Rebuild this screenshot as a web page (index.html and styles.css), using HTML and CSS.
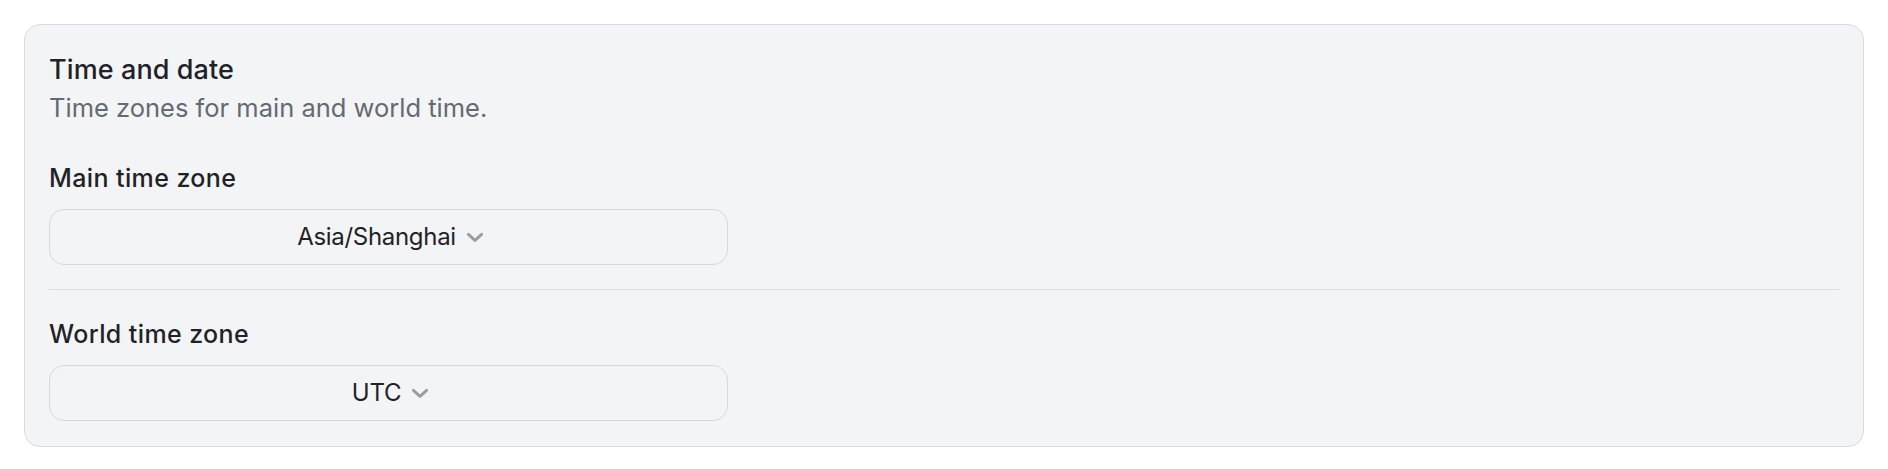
FILE: index.html
```html
<!DOCTYPE html>
<html lang="en">
<head>
<meta charset="utf-8">
<title>Time and date</title>
<link rel="stylesheet" href="styles.css">
</head>
<body>
<section class="card">
  <header class="card-header">
    <h2 class="card-title">Time and date</h2>
    <p class="card-subtitle">Time zones for main and world time.</p>
  </header>
  <div class="field">
    <label class="field-label">Main time zone</label>
    <button class="select" type="button">
      <span class="select-value">Asia/Shanghai</span>
      <svg class="chevron" viewBox="0 0 18 11" width="18" height="11" aria-hidden="true"><path d="M2.4 2.4 L9 8.4 L15.6 2.4" fill="none" stroke="currentColor" stroke-width="3" stroke-linecap="round" stroke-linejoin="round"/></svg>
    </button>
  </div>
  <hr class="divider">
  <div class="field">
    <label class="field-label">World time zone</label>
    <button class="select" type="button">
      <span class="select-value">UTC</span>
      <svg class="chevron" viewBox="0 0 18 11" width="18" height="11" aria-hidden="true"><path d="M2.4 2.4 L9 8.4 L15.6 2.4" fill="none" stroke="currentColor" stroke-width="3" stroke-linecap="round" stroke-linejoin="round"/></svg>
    </button>
  </div>
</section>
</body>
</html>
```

FILE: styles.css
```css
* { box-sizing: border-box; }
html, body { background: #ffffff; }
body {
  margin: 0;
  padding: 24px;
  font-family: Inter, "Noto Sans", "Liberation Sans", sans-serif;
  color: #1f2328;
}
.card {
  background: #f3f4f6;
  border: 1px solid #d9dbdf;
  border-radius: 16px;
  padding: 26px 24px 25px;
}
.card-header { margin-bottom: 33px; }
.card-title {
  margin: 0;
  font-size: 27px;
  line-height: 38px;
  font-weight: 500;
  letter-spacing: 0.1px;
  color: #1f2328;
}
.card-subtitle {
  margin: 0;
  font-size: 25.5px;
  line-height: 38px;
  font-weight: 400;
  color: #646a72;
}
.field { display: flex; flex-direction: column; align-items: flex-start; }
.field-label {
  font-size: 25px;
  line-height: 36px;
  font-weight: 500;
  letter-spacing: 0.4px;
  color: #1f2328;
  margin-bottom: 13px;
}
.select {
  display: flex;
  align-items: center;
  justify-content: center;
  gap: 10px;
  width: 679px;
  height: 56px;
  padding: 0 16px 0 20px;
  background: #f3f4f6;
  border: 1px solid #d6d8dc;
  border-radius: 15px;
  font-family: inherit;
  font-size: 24px;
  letter-spacing: -0.3px;
  color: #1f2328;
}
.select-value { line-height: 30px; }
.chevron { color: #9a9da2; display: block; margin-top: 1px; }
.divider {
  border: 0;
  border-top: 1px solid #dcdee2;
  margin: 24px 0 26px;
}
```
